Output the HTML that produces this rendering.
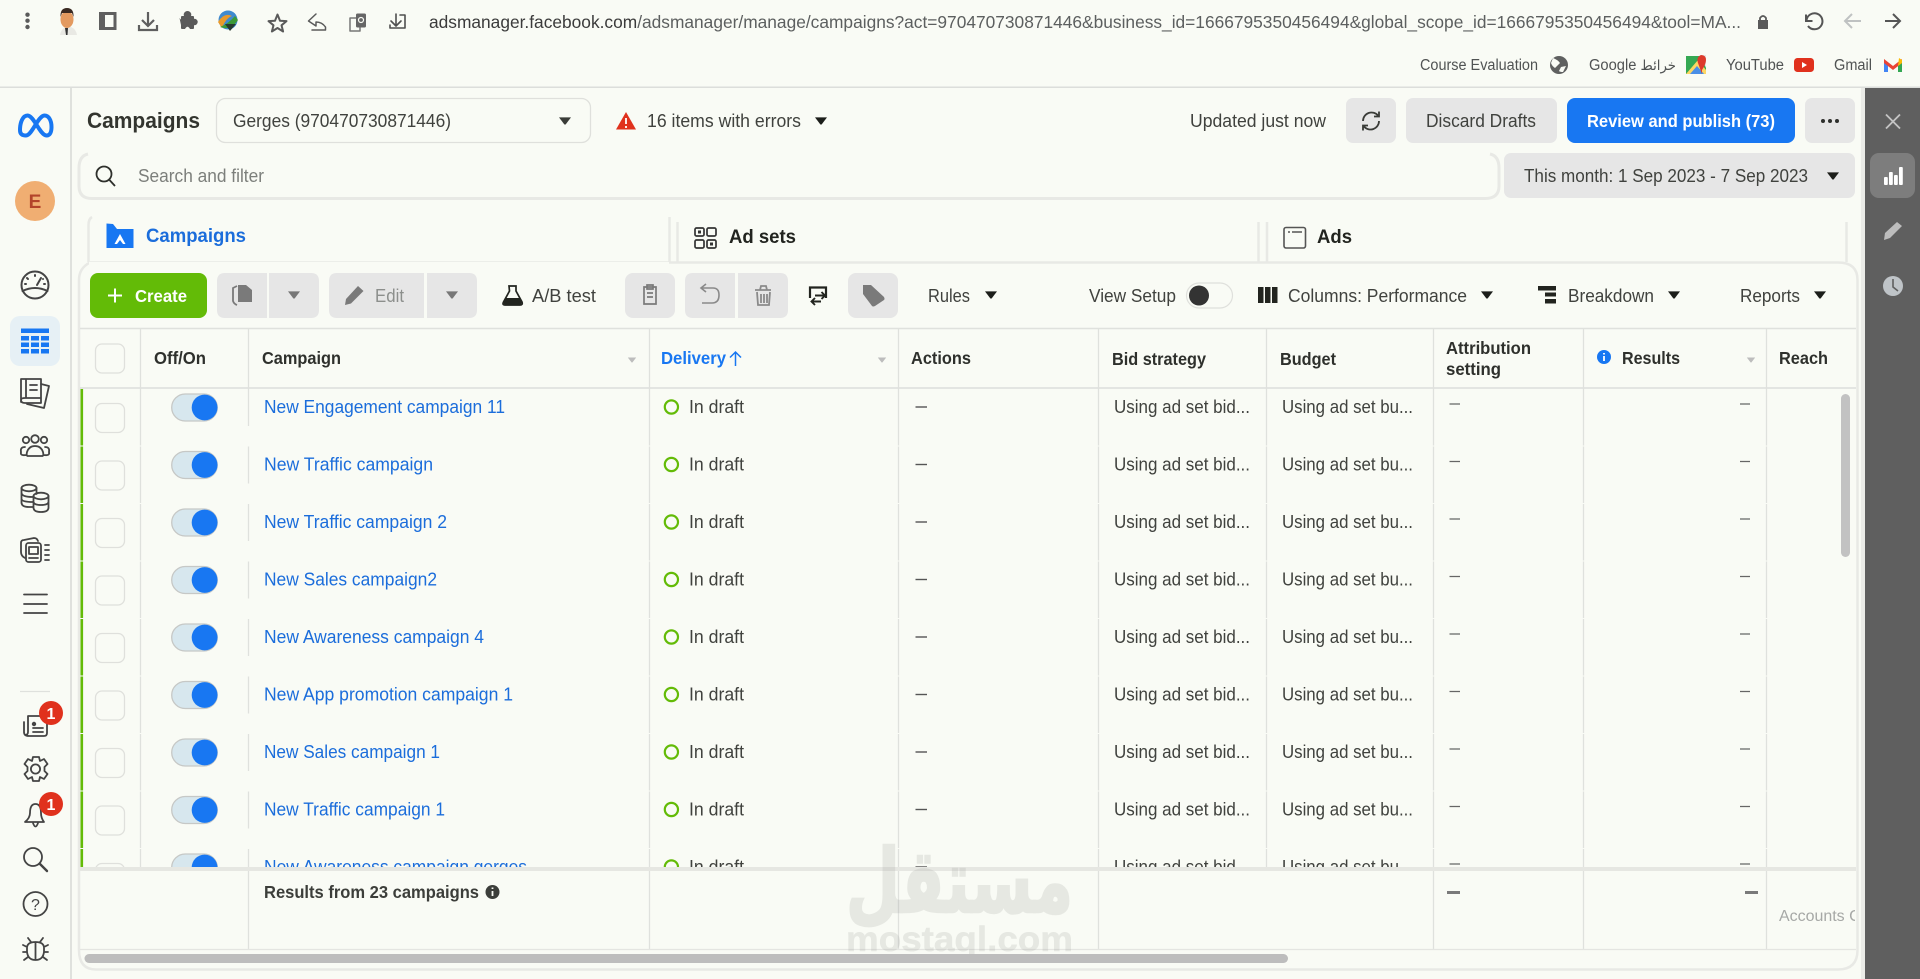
<!DOCTYPE html>
<html lang="en"><head><meta charset="utf-8"><title>Campaigns - Ads Manager</title>
<style>
html,body{margin:0;padding:0;background:#f9fbf5;overflow:hidden;width:1920px;height:979px}
svg{display:block;font-family:"Liberation Sans","DejaVu Sans",sans-serif}
.t{font-size:18px;fill:#40423e}
.b{font-size:17.5px;font-weight:700;fill:#2e302c}
.l{font-size:18px;fill:#1b6ddb}
.g{fill:#e6e6e6}
.ln{stroke:#dfe1dd;stroke-width:1.3;fill:none}
.ic{fill:none;stroke:#444;stroke-width:2;stroke-linecap:round;stroke-linejoin:round}
</style></head><body>
<svg xmlns="http://www.w3.org/2000/svg" width="1920" height="979" viewBox="0 0 1920 979">
<defs>
<path id="c" d="M-6 -3.6H6L0.8 3.2Q0 4-0.8 3.2Z"/>
<clipPath id="rows"><rect x="80" y="389" width="1775" height="478"/></clipPath>
<clipPath id="acc"><rect x="1770" y="880" width="85" height="60"/></clipPath>
<g id="row">
<rect x="80.5" y="0" width="2.6" height="56.5" fill="#63bb07"/>
<path class="ln" d="M140.5 0V56.5M248.5 0V37M649.5 0V56.5M898.5 0V56.5M1098.5 0V56.5M1266.5 0V56.5M1433.5 0V56.5M1583.5 0V56.5M1766.5 0V56.5"/>
<rect x="95.5" y="14.5" width="29" height="29" rx="6.5" fill="#f9fbf5" stroke="#dfe0dc" stroke-width="1.3"/>
<rect x="171.7" y="5" width="45.6" height="27" rx="13.5" fill="#d7e7ee" stroke="#c6c8c6" stroke-width="1.3"/>
<circle cx="204.6" cy="18.5" r="12.9" fill="#1877f2"/>
<circle cx="671.4" cy="18" r="6.6" fill="none" stroke="#63bb07" stroke-width="2.2"/>
<path d="M915.5 18H927" stroke="#555" stroke-width="1.4"/>
<path d="M1449.5 15H1460M1740 15H1750" stroke="#666" stroke-width="1.3"/>
</g>
</defs>
<rect width="1920" height="979" fill="#f9fbf5"/>

<!-- browser bar -->
<g fill="#5a5a5a"><circle cx="27.500" cy="14.700" r="2.200"/><circle cx="27.500" cy="20.700" r="2.200"/><circle cx="27.500" cy="27" r="2.200"/></g>
<path d="M60 35Q61 29 66 27H71Q76 29 77 35Z" fill="#e9e9e4"/>
<ellipse cx="67" cy="19.500" rx="6.500" ry="8.500" fill="#e39a60"/>
<path d="M60.500 17Q60 8 67 8Q74 8 73.500 17L72 13H62Z" fill="#3a2a22"/>
<path d="M65 28H68L67.500 35H66Z" fill="#333"/>
<path d="M99 12H116.500V30H99Z M105 15V27H113.500V15Z" fill="#5f5f5f" fill-rule="evenodd"/>
<path d="M148 12V25M142 20L148 26L154 20M139 25V30H157V25" fill="none" stroke="#5f5f5f" stroke-width="2.200"/>
<rect x="181" y="16" width="13" height="13" rx="1" fill="#5a5a5a"/><circle cx="187.500" cy="14.800" r="3.800" fill="#5a5a5a"/><circle cx="194.500" cy="22" r="3.200" fill="#5a5a5a"/><path d="M185 29Q187.500 24.500 190 29Z" fill="#f9fbf5"/><path d="M179.500 18L181 25L183 22Z" fill="#5a5a5a"/>
<circle cx="228" cy="20" r="9.500" fill="#3f8ad0"/>
<path d="M218 22Q224 12 232 16Q226 18 222 28Z" fill="#e99a2c"/>
<path d="M220 27Q228 24 235 16L238 20Q232 29 224 28Z" fill="#3c9a36"/>
<path d="M225 24H236L230 31Z" fill="#283a30"/>
<path d="M277.500 14.500L280 20.700L286.500 21.100L281.500 25.300L283.100 31.500L277.500 28L271.900 31.500L273.500 25.300L268.500 21.100L275 20.700Z" class="ic" style="stroke:#5a5a5a"/>
<path d="M316 14L308.500 21L316 26V22Q322 22 325.500 27V30H312" class="ic" style="stroke:#5a5a5a;stroke-width:1.500"/>
<rect x="350" y="18" width="10" height="13" class="ic" style="stroke:#777;stroke-width:1.500"/>
<rect x="356" y="13.500" width="10" height="14" rx="1.500" fill="#666"/>
<circle cx="361" cy="20" r="2.500" fill="none" stroke="#f9fbf5" stroke-width="1.200"/>
<path d="M396 14V25M391 21L396 26L401 21M400 15H405V28H390V25" class="ic" style="stroke:#4f4f4f;stroke-width:1.600"/>
<text x="429" y="28" font-size="17.500" fill="#5c5f5f" textLength="1312" lengthAdjust="spacingAndGlyphs"><tspan fill="#3b3b3b">adsmanager.facebook.com</tspan>/adsmanager/manage/campaigns?act=970470730871446&amp;business_id=1666795350456494&amp;global_scope_id=1666795350456494&amp;tool=MA...</text>
<path d="M1758 20H1768V29H1758Z" fill="#5a5a5a"/><path d="M1760 20V18Q1763 14 1766 18V20" fill="none" stroke="#5a5a5a" stroke-width="1.800"/>
<path d="M1806 14.500V21H1812.500M1806.500 20.500A8 8 0 1 1 1808 26" fill="none" stroke="#555" stroke-width="2"/>
<path d="M1861 21H1845M1852 14L1845 21L1852 28" fill="none" stroke="#bfc2c2" stroke-width="2"/>
<path d="M1885 21H1900M1893 14L1900 21L1893 28" fill="none" stroke="#555" stroke-width="2"/>

<!-- bookmarks -->
<g font-size="15.500" fill="#505353">
<text x="1420" y="70" textLength="118" lengthAdjust="spacingAndGlyphs">Course Evaluation</text>
<text x="1589" y="70" textLength="87" lengthAdjust="spacingAndGlyphs">Google <tspan font-family="'DejaVu Sans',sans-serif" font-size="14">خرائط</tspan></text>
<text x="1726" y="70" textLength="58" lengthAdjust="spacingAndGlyphs">YouTube</text>
<text x="1834" y="70" textLength="38" lengthAdjust="spacingAndGlyphs">Gmail</text>
</g>
<circle cx="1559" cy="65" r="9" fill="#5f6060"/>
<path d="M1553 58Q1558 60 1560 63L1555 68Q1552 66 1551 63ZM1561 67L1566 66L1563 72Q1560 72 1559 71Z" fill="#f9fbf5"/>
<path d="M1686 56H1706V74H1686Z" fill="#35a853"/>
<path d="M1686 74L1698 60L1706 70V74Z" fill="#fdd663"/>
<path d="M1690 74L1697 66L1704 74Z" fill="#4a8fe7"/>
<path d="M1700 55H1706V68Z" fill="#e6e6e6"/>
<path d="M1702 74L1698 63Q1696 57 1701 55Q1706 55 1706 60Q1706 64 1702 70Z" fill="#dd3a2b"/>
<rect x="1794" y="58" width="20" height="14" rx="3.500" fill="#e0311d"/><path d="M1802 62L1807 65L1802 68Z" fill="#fff"/>
<path d="M1884 60V72H1888V64Z" fill="#4285f4"/><path d="M1898 64V72H1902V60Z" fill="#34a853"/>
<path d="M1884 59L1893 66L1902 59V63L1893 70L1884 63Z" fill="#ea4335"/><path d="M1899 58L1902 60V63L1898 66Z" fill="#fbbc04"/>
<rect y="86.500" width="1920" height="1.500" fill="#dcdedb"/>

<!-- sidebar -->
<rect x="70" y="88" width="2" height="891" fill="#dfe1dd"/>
<path d="M20 130C20 122 23 115.500 27.500 115.500C34 115.500 40 135.500 46.500 135.500C50 135.500 51.500 132 51.500 127C51.500 120 48.500 115.500 44.500 115.500C38 115.500 32 135.500 26 135.500C22 135.500 20 134 20 130Z" fill="none" stroke="#1877f2" stroke-width="4"/>
<circle cx="35" cy="201" r="20" fill="#f0ae72"/>
<text x="35" y="208" font-size="19" font-weight="700" fill="#b3442b" text-anchor="middle">E</text>
<g class="ic">
<circle cx="35" cy="285" r="13.500"/><path d="M22.500 291Q35 285 47.500 291M37 285L41 278"/>
<path d="M35 275V276M27 278L28 279M43 279V279M25 284H26M45 284H44"/>
</g>
<rect x="10" y="316" width="50" height="50" rx="10" fill="#e6f0f5"/>
<g fill="#1877f2">
<rect x="21" y="328.500" width="28" height="4.500"/>
<rect x="21" y="336" width="8" height="4.500"/><rect x="31" y="336" width="8" height="4.500"/><rect x="41" y="336" width="8" height="4.500"/>
<rect x="21" y="342.500" width="8" height="4.500"/><rect x="31" y="342.500" width="8" height="4.500"/><rect x="41" y="342.500" width="8" height="4.500"/>
<rect x="21" y="349" width="8" height="4.500"/><rect x="31" y="349" width="8" height="4.500"/><rect x="41" y="349" width="8" height="4.500"/>
</g>
<g class="ic" stroke-width="1.800" style="stroke-width:1.800">
<path d="M21 402V379H41V403H25Q21 403 21 400Q21 398 25 398H41M26 379V398M30 385H37M30 390H37"/>
<path d="M41 384L49 386L44 408L27 404"/>
<circle cx="26" cy="440" r="3.200"/><circle cx="35" cy="439" r="3.800"/><circle cx="44" cy="440" r="3.200"/>
<path d="M28 456H42Q44 456 43 452Q41 446 35 446Q29 446 27 452Q26 456 28 456ZM25 447Q20 447 21 452Q20 456 26 455M45 447Q50 447 49 452Q50 456 44 455"/>
<ellipse cx="29" cy="488" rx="7.500" ry="3.300"/><path d="M21.500 488V503Q22 507 29 507H33M21.500 493Q22 497 33 497M21.500 499Q22 502 33 502M36.500 488V494"/>
<ellipse cx="41" cy="496" rx="7.500" ry="3.300"/><path d="M33.500 496V508Q34 512 41 512Q48 512 48.500 508V496M33.500 502Q34 505 41 505Q48 505 48.500 502"/>
<path d="M25 558Q21 556 21 552V543Q21 540 24 540L34 538Q37 538 38 541"/>
<rect x="26" y="543" width="15" height="19" rx="2.500"/><rect x="29" y="547" width="9" height="7"/><path d="M29 558H38M45 545H49M45 550H49M45 555H49M45 560H49"/>
<path d="M24 594.500H47M24 604H47M24 613H47"/>
</g>
<path d="M20 691.500H50" stroke="#dfe1dd" stroke-width="1.200"/>
<g class="ic" style="stroke-width:1.800">
<path d="M28 716H46Q47 716 47 718V733Q47 736 44 736H29Q24 736 24 732V722M28 716V732Q28 735 25 735"/>
<path d="M33 728H43M33 732H43"/>
<circle cx="35.500" cy="769" r="4.600"/>
<path d="M33 757H39L40 761L44 759L47.500 764L44.500 767V771L47.500 774L44 779L40 777L39 781H33L32 777L28 779L24.500 774L27.500 771V767L24.500 764L28 759L32 761Z"/>
<path d="M27 822H44Q41 818 41 813Q41 804 35.500 804Q30 804 30 813Q30 818 25 822ZM33 823Q35.500 830 38 823"/>
<circle cx="33" cy="857" r="9"/><path d="M40 864L47 871" style="stroke-width:2.400"/>
<circle cx="35.500" cy="904" r="12"/>
<path d="M27 948Q27 942 35.500 942Q44 942 44 948V952Q43 960 35.500 960Q28 960 27 952ZM35.500 942V960M31 942L28 938M40 942L43 938M27 947L23 945M44 947L48 945M27 952H23M44 952H48M28 957L24 960M43 957L47 960"/>
</g>
<circle cx="34" cy="724" r="2.200" fill="#444"/>
<text x="35.500" y="910" font-size="16" fill="#444" text-anchor="middle">?</text>
<circle cx="51" cy="713" r="12" fill="#e0311d"/><text x="51" y="719" font-size="16" font-weight="700" fill="#fff" text-anchor="middle">1</text>
<circle cx="51" cy="804" r="12" fill="#e0311d"/><text x="51" y="810" font-size="16" font-weight="700" fill="#fff" text-anchor="middle">1</text>

<!-- right panel -->
<rect x="1865" y="88" width="55" height="891" fill="#5f5f5f"/>
<rect x="1861" y="88" width="4" height="891" fill="#ebece8"/>
<path d="M1886 114.500L1900 128.500M1900 114.500L1886 128.500" stroke="#c4c4c4" stroke-width="1.800"/>
<rect x="1870" y="153" width="45" height="45" rx="9" fill="#7d7d7d"/>
<g fill="#fff"><rect x="1884" y="177" width="3.800" height="8" rx="1"/><rect x="1889" y="172" width="3.800" height="13" rx="1"/><rect x="1894" y="175" width="3.800" height="10" rx="1"/><rect x="1899" y="167" width="3.800" height="18" rx="1"/></g>
<path d="M1884 240L1885 233L1897 222L1902 226L1890 238Z" fill="#bdbdbd"/>
<circle cx="1893" cy="286" r="10" fill="#bfc4c8"/><path d="M1893 279V287L1898 291" fill="none" stroke="#5f5f5f" stroke-width="1.600"/>

<!-- header row -->
<text x="87" y="128" font-size="22" font-weight="700" fill="#33352f" textLength="113" lengthAdjust="spacingAndGlyphs">Campaigns</text>
<rect x="216.500" y="98.500" width="374" height="44" rx="9" fill="#f9fbf5" stroke="#dfe0dc" stroke-width="1.300"/>
<text class="t" x="233" y="127" textLength="218" lengthAdjust="spacingAndGlyphs">Gerges (970470730871446)</text>
<use href="#c" x="565" y="121" fill="#3a3c38"/>
<path d="M626 112L636 129.500H616Z" fill="#e0311d"/><path d="M626 118V124M626 126V128" stroke="#fff" stroke-width="1.800"/>
<text class="t" x="647" y="127" textLength="154" lengthAdjust="spacingAndGlyphs">16 items with errors</text>
<use href="#c" x="821" y="121" fill="#1c1e1a"/>
<text class="t" x="1190" y="127" textLength="136" lengthAdjust="spacingAndGlyphs">Updated just now</text>
<rect class="g" x="1346" y="98" width="50" height="45" rx="7"/>
<path d="M1363 121A8.500 8.500 0 0 1 1378 115.500M1379 121A8.500 8.500 0 0 1 1364 126.500M1379 111.500V116.500H1374M1363 130.500V125.500H1368" fill="none" stroke="#3a3c38" stroke-width="1.800"/>
<rect class="g" x="1406" y="98" width="151" height="45" rx="7"/>
<text class="t" x="1426" y="127" textLength="110" lengthAdjust="spacingAndGlyphs">Discard Drafts</text>
<rect x="1567" y="98" width="228" height="45" rx="8" fill="#1877f2"/>
<text x="1587" y="127" font-size="17.500" font-weight="700" fill="#fff" textLength="188" lengthAdjust="spacingAndGlyphs">Review and publish (73)</text>
<rect class="g" x="1805" y="98" width="50" height="45" rx="7"/>
<g fill="#2e302c"><circle cx="1823" cy="121" r="2"/><circle cx="1830" cy="121" r="2"/><circle cx="1837" cy="121" r="2"/></g>

<!-- search row -->
<path d="M1485 198.500H92Q79 198.500 79 186V168Q79 156 88 154M1490 154Q1499 156 1499 168V186Q1499 198.500 1485 198.500" fill="none" stroke="#e8e9e5" stroke-width="3"/>
<circle cx="104" cy="174" r="7.500" fill="none" stroke="#2e302c" stroke-width="1.800"/><path d="M109.500 180L115 186" stroke="#2e302c" stroke-width="1.800"/>
<text x="138" y="182" font-size="18" fill="#7c7f7b" textLength="126" lengthAdjust="spacingAndGlyphs">Search and filter</text>
<rect class="g" x="1504" y="153" width="351" height="45" rx="7"/>
<text class="t" x="1524" y="182" textLength="284" lengthAdjust="spacingAndGlyphs">This month: 1 Sep 2023 - 7 Sep 2023</text>
<use href="#c" x="1833" y="176" fill="#1c1e1a"/>

<!-- tabs -->
<path d="M88.500 262V225Q88.500 219 92 217" fill="none" stroke="#e8e9e5" stroke-width="2.500"/>
<path d="M669.500 217V262M677.500 222V262M1258.500 222V262M1267 222V262M1846.500 222V262" fill="none" stroke="#e8e9e5" stroke-width="2.500"/>
<path d="M106.500 248V223.500L113 224L117 229H133.500V248Z" fill="#1877f2"/><path d="M120 234L125.500 244H114.500Z" fill="#fff"/><path d="M120 240L117 244H123Z" fill="#1877f2"/>
<text x="146" y="242" font-size="19.500" font-weight="700" fill="#1b6ddb" textLength="100" lengthAdjust="spacingAndGlyphs">Campaigns</text>
<g fill="none" stroke="#333" stroke-width="1.700">
<rect x="695" y="228" width="9" height="8" rx="1.500"/><rect x="707" y="228" width="9" height="8" rx="1.500"/><rect x="695" y="240" width="9" height="8" rx="1.500"/><rect x="707" y="240" width="9" height="8" rx="1.500"/>
</g>
<rect x="698" y="230.500" width="3" height="3" fill="#333"/><rect x="710" y="242.500" width="3" height="3" fill="#333"/>
<text x="729" y="243" font-size="19.500" font-weight="700" fill="#22241f" textLength="67" lengthAdjust="spacingAndGlyphs">Ad sets</text>
<rect x="1284" y="227.500" width="21.500" height="20.500" rx="2" fill="none" stroke="#555" stroke-width="1.600"/><path d="M1288 232H1290M1292 232H1302" stroke="#555" stroke-width="1.500"/>
<text x="1317" y="243" font-size="19.500" font-weight="700" fill="#22241f" textLength="35" lengthAdjust="spacingAndGlyphs">Ads</text>

<!-- table panel frame -->
<path d="M90 262.500H1838Q1857.500 262.500 1857.500 280V950Q1857.500 969.500 1838 969.500H96Q79 969.500 79 950V280Q79 268 90 262.500" fill="none" stroke="#e8e9e5" stroke-width="2.500"/>
<rect x="89" y="262" width="580" height="3" fill="#f9fbf5"/>

<!-- toolbar -->
<rect x="90" y="273" width="117" height="45" rx="8" fill="#63bb07"/>
<path d="M115 288.500V302.500M108 295.500H122" stroke="#fff" stroke-width="2"/>
<text x="135" y="302" font-size="17.500" font-weight="700" fill="#fff" textLength="52" lengthAdjust="spacingAndGlyphs">Create</text>
<path class="g" d="M225 273H267V318H225Q217 318 217 310V281Q217 273 225 273Z"/>
<path class="g" d="M269 273H311Q319 273 319 281V310Q319 318 311 318H269Z"/>
<path d="M237 286L233 288V301Q234 304 237 305" fill="none" stroke="#7a7a7a" stroke-width="1.800"/><path d="M238 285H246L252 290V302H238Z" fill="#7a7a7a"/>
<use href="#c" x="294" y="295" fill="#777"/>
<path class="g" d="M337 273H424V318H337Q329 318 329 310V281Q329 273 337 273Z"/>
<path class="g" d="M427 273H469Q477 273 477 281V310Q477 318 469 318H427Z"/>
<path d="M345 305L346 299L358 286L363.500 291L351 303.500Z" fill="#7a7a7a"/>
<text x="375" y="302" font-size="18" fill="#8c8f8c" textLength="29" lengthAdjust="spacingAndGlyphs">Edit</text>
<use href="#c" x="452" y="295" fill="#777"/>
<path d="M509 286H516V291L522 302Q523 305 520 305H505Q502 305 503.500 302L509.500 291Z" fill="none" stroke="#22241f" stroke-width="1.700"/><path d="M505.500 298H519.500L522 303L520 305H505L503 303Z" fill="#22241f"/>
<text class="t" x="532" y="302" textLength="64" lengthAdjust="spacingAndGlyphs">A/B test</text>
<rect class="g" x="625" y="273" width="50" height="45" rx="8"/>
<path d="M644 287H656V304H644ZM647 285H653V289H647ZM647 293H653M647 297H653" fill="none" stroke="#7a7a7a" stroke-width="1.700"/>
<path class="g" d="M693 273H735V318H693Q685 318 685 310V281Q685 273 693 273Z"/>
<path class="g" d="M738 273H780Q788 273 788 281V310Q788 318 780 318H738Z"/>
<path d="M702 288H713Q719 288 719 295Q719 303 712 303H702M706 284L701 288L706 292" fill="none" stroke="#8a8a8a" stroke-width="1.600"/>
<path d="M755 290H771M760 290L761 286H766L767 290M757 292L758 305H769L770 292M761 294V303M764 294V303M767 294V303" fill="none" stroke="#8a8a8a" stroke-width="1.800"/>
<path d="M810 298V287.500H826V298" fill="none" stroke="#22241f" stroke-width="2.200"/>
<path d="M815 295.500H825M821.500 292L825 295.500L821.500 299M821 301.500H811.500M815 298L811.500 301.500L815 305" fill="none" stroke="#22241f" stroke-width="1.900"/>
<rect class="g" x="848" y="273" width="50" height="45" rx="8"/>
<path d="M863 285H871L884 297Q885 299 884 300L875 306Q873 307 872 306L863 294Z" fill="#7a7a7a"/>
<text class="t" x="928" y="302" textLength="42" lengthAdjust="spacingAndGlyphs">Rules</text>
<use href="#c" x="991" y="295" fill="#1c1e1a"/>
<text class="t" x="1089" y="302" textLength="87" lengthAdjust="spacingAndGlyphs">View Setup</text>
<rect x="1186.500" y="283" width="46" height="25" rx="12.500" fill="#f9fbf5" stroke="#dfe0dc" stroke-width="1.200"/>
<circle cx="1199" cy="295.500" r="10" fill="#333"/>
<rect x="1258" y="287" width="5.500" height="16" fill="#22241f"/><rect x="1265" y="287" width="5.500" height="16" fill="#22241f"/><rect x="1272" y="287" width="5.500" height="16" fill="#22241f"/>
<text class="t" x="1288" y="302" textLength="179" lengthAdjust="spacingAndGlyphs">Columns: Performance</text>
<use href="#c" x="1487" y="295" fill="#1c1e1a"/>
<rect x="1538" y="286" width="18" height="4.500" fill="#22241f"/><rect x="1545" y="292.500" width="11" height="4" fill="#22241f"/><rect x="1545" y="299" width="11" height="4.500" fill="#22241f"/>
<text class="t" x="1568" y="302" textLength="86" lengthAdjust="spacingAndGlyphs">Breakdown</text>
<use href="#c" x="1674" y="295" fill="#1c1e1a"/>
<text class="t" x="1740" y="302" textLength="60" lengthAdjust="spacingAndGlyphs">Reports</text>
<use href="#c" x="1820" y="295" fill="#1c1e1a"/>

<!-- table header -->
<path d="M80 328.500H1856" stroke="#dfe1dd" stroke-width="1.500"/>
<path d="M80 388H1856" stroke="#dcdedb" stroke-width="1.500"/>
<path class="ln" d="M140.500 329V389M248.500 329V389M649.500 329V389M898.500 329V389M1098.500 329V389M1266.500 329V389M1433.500 329V389M1583.500 329V389M1766.500 329V389"/>
<rect x="95.500" y="344" width="29" height="29" rx="6.500" fill="#f9fbf5" stroke="#dfe0dc" stroke-width="1.300"/>
<text class="b" x="154" y="364" textLength="52" lengthAdjust="spacingAndGlyphs">Off/On</text>
<text class="b" x="262" y="364" textLength="79" lengthAdjust="spacingAndGlyphs">Campaign</text>
<use href="#c" x="632" y="360" fill="#bdbdbd" transform="translate(189.600 108) scale(.7)"/>
<text x="661" y="364" font-size="17.500" font-weight="700" fill="#1877f2" textLength="65" lengthAdjust="spacingAndGlyphs">Delivery</text>
<path d="M735.500 366V352M730 357.500L735.500 352L741 357.500" fill="none" stroke="#1877f2" stroke-width="1.500"/>
<use href="#c" x="882" y="360" fill="#bdbdbd" transform="translate(264.600 108) scale(.7)"/>
<text class="b" x="911" y="364" textLength="60" lengthAdjust="spacingAndGlyphs">Actions</text>
<text class="b" x="1112" y="365" textLength="94" lengthAdjust="spacingAndGlyphs">Bid strategy</text>
<text class="b" x="1280" y="365" textLength="56" lengthAdjust="spacingAndGlyphs">Budget</text>
<text class="b" x="1446" y="354" textLength="85" lengthAdjust="spacingAndGlyphs">Attribution</text>
<text class="b" x="1446" y="375" textLength="55" lengthAdjust="spacingAndGlyphs">setting</text>
<circle cx="1604" cy="357" r="7" fill="#1877f2"/><path d="M1604 356V361M1604 353V354.500" stroke="#fff" stroke-width="1.800"/>
<text class="b" x="1622" y="364" textLength="58" lengthAdjust="spacingAndGlyphs">Results</text>
<use href="#c" x="1751" y="360" fill="#bdbdbd" transform="translate(525.300 108) scale(.7)"/>
<text class="b" x="1779" y="364" textLength="49" lengthAdjust="spacingAndGlyphs">Reach</text>

<!-- rows -->
<g clip-path="url(#rows)">
<use href="#row" y="389"/><use href="#row" y="446.500"/><use href="#row" y="504"/><use href="#row" y="561.500"/><use href="#row" y="619"/><use href="#row" y="676.500"/><use href="#row" y="734"/><use href="#row" y="791.500"/><use href="#row" y="849"/>
<text class="l" x="264" y="413" textLength="241" lengthAdjust="spacingAndGlyphs">New Engagement campaign 11</text>
<text class="l" x="264" y="470.500" textLength="169" lengthAdjust="spacingAndGlyphs">New Traffic campaign</text>
<text class="l" x="264" y="528" textLength="183" lengthAdjust="spacingAndGlyphs">New Traffic campaign 2</text>
<text class="l" x="264" y="585.500" textLength="173" lengthAdjust="spacingAndGlyphs">New Sales campaign2</text>
<text class="l" x="264" y="643" textLength="220" lengthAdjust="spacingAndGlyphs">New Awareness campaign 4</text>
<text class="l" x="264" y="700.500" textLength="249" lengthAdjust="spacingAndGlyphs">New App promotion campaign 1</text>
<text class="l" x="264" y="758" textLength="176" lengthAdjust="spacingAndGlyphs">New Sales campaign 1</text>
<text class="l" x="264" y="815.500" textLength="181" lengthAdjust="spacingAndGlyphs">New Traffic campaign 1</text>
<text class="l" x="264" y="873" textLength="263" lengthAdjust="spacingAndGlyphs">New Awareness campaign gerges</text>
<g class="t">
<text x="689" y="413" textLength="55" lengthAdjust="spacingAndGlyphs">In draft</text><text x="1114" y="413" textLength="136" lengthAdjust="spacingAndGlyphs">Using ad set bid...</text><text x="1282" y="413" textLength="131" lengthAdjust="spacingAndGlyphs">Using ad set bu...</text>
<text x="689" y="470.500" textLength="55" lengthAdjust="spacingAndGlyphs">In draft</text><text x="1114" y="470.500" textLength="136" lengthAdjust="spacingAndGlyphs">Using ad set bid...</text><text x="1282" y="470.500" textLength="131" lengthAdjust="spacingAndGlyphs">Using ad set bu...</text>
<text x="689" y="528" textLength="55" lengthAdjust="spacingAndGlyphs">In draft</text><text x="1114" y="528" textLength="136" lengthAdjust="spacingAndGlyphs">Using ad set bid...</text><text x="1282" y="528" textLength="131" lengthAdjust="spacingAndGlyphs">Using ad set bu...</text>
<text x="689" y="585.500" textLength="55" lengthAdjust="spacingAndGlyphs">In draft</text><text x="1114" y="585.500" textLength="136" lengthAdjust="spacingAndGlyphs">Using ad set bid...</text><text x="1282" y="585.500" textLength="131" lengthAdjust="spacingAndGlyphs">Using ad set bu...</text>
<text x="689" y="643" textLength="55" lengthAdjust="spacingAndGlyphs">In draft</text><text x="1114" y="643" textLength="136" lengthAdjust="spacingAndGlyphs">Using ad set bid...</text><text x="1282" y="643" textLength="131" lengthAdjust="spacingAndGlyphs">Using ad set bu...</text>
<text x="689" y="700.500" textLength="55" lengthAdjust="spacingAndGlyphs">In draft</text><text x="1114" y="700.500" textLength="136" lengthAdjust="spacingAndGlyphs">Using ad set bid...</text><text x="1282" y="700.500" textLength="131" lengthAdjust="spacingAndGlyphs">Using ad set bu...</text>
<text x="689" y="758" textLength="55" lengthAdjust="spacingAndGlyphs">In draft</text><text x="1114" y="758" textLength="136" lengthAdjust="spacingAndGlyphs">Using ad set bid...</text><text x="1282" y="758" textLength="131" lengthAdjust="spacingAndGlyphs">Using ad set bu...</text>
<text x="689" y="815.500" textLength="55" lengthAdjust="spacingAndGlyphs">In draft</text><text x="1114" y="815.500" textLength="136" lengthAdjust="spacingAndGlyphs">Using ad set bid...</text><text x="1282" y="815.500" textLength="131" lengthAdjust="spacingAndGlyphs">Using ad set bu...</text>
<text x="689" y="873" textLength="55" lengthAdjust="spacingAndGlyphs">In draft</text><text x="1114" y="873" textLength="136" lengthAdjust="spacingAndGlyphs">Using ad set bid...</text><text x="1282" y="873" textLength="131" lengthAdjust="spacingAndGlyphs">Using ad set bu...</text>
</g>
</g>
<rect x="1841" y="394" width="9" height="163" rx="4.500" fill="#c2c2c2"/>

<!-- footer -->
<rect x="80" y="867" width="1776" height="4" fill="#e6e7e2"/>
<path class="ln" d="M248.500 871V949M649.500 871V949M898.500 871V949M1098.500 871V949M1433.500 871V949M1583.500 871V949M1766.500 871V949"/>
<path d="M80 949.500H1856" stroke="#e4e5e1" stroke-width="1.300"/>
<text x="264" y="898" font-size="17.500" font-weight="700" fill="#3c3e3a" textLength="215" lengthAdjust="spacingAndGlyphs">Results from 23 campaigns</text>
<circle cx="492.500" cy="892" r="7" fill="#3c3e3a"/><path d="M492.500 891V896M492.500 887.500V889" stroke="#f9fbf5" stroke-width="1.800"/>
<path d="M1447 892.500H1460M1745 892.500H1758" stroke="#7a7a7a" stroke-width="3"/>
<g clip-path="url(#acc)"><text x="1779" y="921" font-size="15.500" fill="#a6a8a6" textLength="118" lengthAdjust="spacingAndGlyphs">Accounts Center</text></g>

<!-- watermark -->
<g fill="#9d9f9b" stroke="#9d9f9b" stroke-width="2.500" opacity=".2">
<text x="846" y="912" font-family="'DejaVu Sans',sans-serif" font-size="88" font-weight="700" textLength="227" lengthAdjust="spacingAndGlyphs">مستقل</text>
<text x="846" y="951" font-size="35" stroke-width="0.500" font-weight="700" textLength="227" lengthAdjust="spacingAndGlyphs">mostaql.com</text>
</g>
<rect x="84.500" y="954" width="1203.500" height="9" rx="4.500" fill="#bdbdbd"/>
</svg>
</body></html>
